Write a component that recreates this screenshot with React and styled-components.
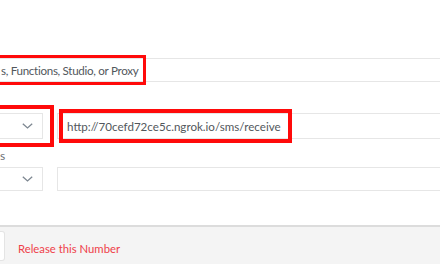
import React from 'react';
import styled, { createGlobalStyle } from 'styled-components';

const GlobalStyle = createGlobalStyle`
  html, body {
    margin: 0;
    padding: 0;
    background: #ffffff;
  }
  body {
    width: 440px;
    height: 264px;
    overflow: hidden;
    font-family: Lato, "Open Sans", sans-serif;
  }
`;

const Page = styled.div`
  width: 440px;
  height: 264px;
  display: flex;
  flex-direction: column;
  overflow: hidden;
`;

const Form = styled.div`
  display: flex;
  flex-direction: column;
  padding-top: 58px;
  flex: 1;
`;

const Row = styled.div`
  position: relative;
  display: flex;
  gap: 14px;
  margin-top: ${p => p.$top || 0}px;
  height: ${p => p.$h || 25}px;
`;

const Field = styled.div`
  flex: 1;
  margin-left: ${p => p.$left || 0}px;
  margin-right: -20px;
  box-sizing: border-box;
  border: 1px solid #e6e6e6;
  display: flex;
  align-items: center;
  padding-left: ${p => p.$pad || 8}px;
  font-size: 11.6px;
  letter-spacing: ${p => p.$ls || 0}px;
  color: #52575c;
  white-space: nowrap;
`;

const Select = styled.div`
  width: 60px;
  margin-left: -17px;
  box-sizing: border-box;
  border: 1px solid #e6e6e6;
  display: flex;
  align-items: center;
  justify-content: flex-end;
  padding-right: 9px;
`;

const Label = styled.div`
  margin-top: 10px;
  height: 14px;
  font-size: 12px;
  color: #6b7075;
  line-height: 14px;
`;

const Highlight = styled.div`
  position: absolute;
  left: ${p => p.$x}px;
  top: ${p => p.$y}px;
  width: ${p => p.$w}px;
  height: ${p => p.$h}px;
  box-sizing: border-box;
  border: ${p => p.$t || 4}px solid #ff0a0a;
  pointer-events: none;
`;

const Footer = styled.div`
  height: 37px;
  border-top: 2px solid #dcdcdc;
  background: #f4f4f4;
  display: flex;
  align-items: center;
  gap: 13px;
`;

const GhostButton = styled.div`
  width: 4px;
  height: 28px;
  background: #ffffff;
  border: 1px solid #e4e4e4;
  border-left: none;
  border-radius: 0 3px 3px 0;
`;

const DangerText = styled.span`
  color: #ef4049;
  font-size: 11.3px;
  padding-top: 5px;
`;

const Chevron = () => (
  <svg width="11" height="6" viewBox="0 0 11 6" fill="none">
    <path d="M0.8 0.8 L5.5 5 L10.2 0.8" stroke="#7d8791" strokeWidth="1.3" />
  </svg>
);

export default function App() {
  return (
    <Page>
      <GlobalStyle />
      <Form>
        <Row $h={24}>
          <Field $left={-10} $pad={10} $ls={-0.3}>s, Functions, Studio, or Proxy</Field>
          <Highlight $x={-4} $y={-3} $w={150} $h={30} $t={3} />
        </Row>
        <Row $top={31} $h={26}>
          <Select><Chevron /></Select>
          <Field $pad={9}>http://70cefd72ce5c.ngrok.io/sms/receive</Field>
          <Highlight $x={-4} $y={-8} $w={58} $h={42} />
          <Highlight $x={59} $y={-4} $w={233} $h={34} />
        </Row>
        <Label>s</Label>
        <Row $top={4} $h={24}>
          <Select><Chevron /></Select>
          <Field />
        </Row>
      </Form>
      <Footer>
        <GhostButton />
        <DangerText>Release this Number</DangerText>
      </Footer>
    </Page>
  );
}
